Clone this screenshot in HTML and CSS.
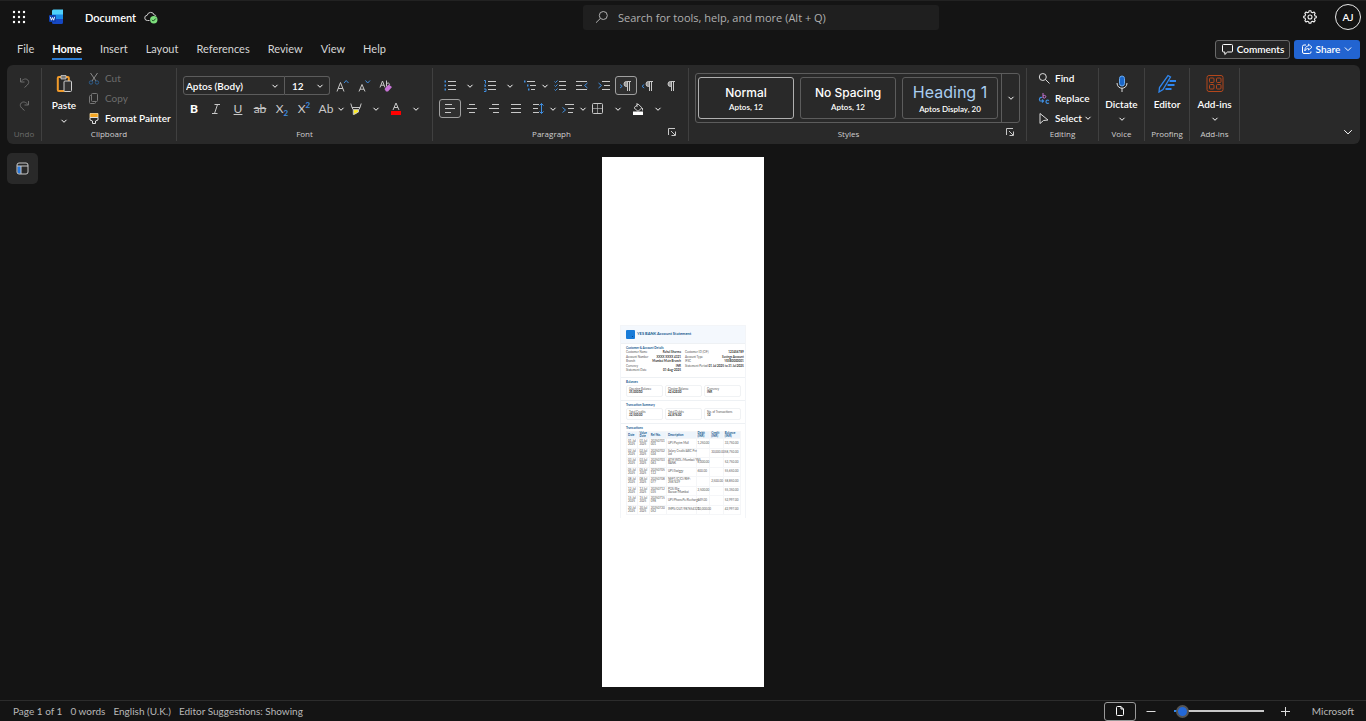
FILE: index.html
```html
<!doctype html>
<html lang="en">

<head>
    <meta charset="utf-8">
    <meta name="viewport" content="width=device-width, initial-scale=1">
    <title>Document</title>
    <link rel="stylesheet" href="styles.css">
</head>

<body>
    <!-- shared icons -->
    <svg class="sprite" aria-hidden="true">
        <symbol id="chevron" viewBox="0 0 8 8"><path d="M1.500 2.800 4 5.300 6.500 2.800" fill="none" stroke="currentColor" vector-effect="non-scaling-stroke" /></symbol>
        <symbol id="search" viewBox="0 0 14 14"><circle cx="8.300" cy="5.500" r="4" fill="none" stroke="currentColor" /><path d="M5.300 8.500 1 12.700" stroke="currentColor" /></symbol>
        <symbol id="launcher" viewBox="0 0 10 10"><path d="M1.500 8V1.500H8M4 4l4 4M8.500 4.500v4h-4" fill="none" stroke="currentColor" /></symbol>
        <symbol id="pilcrow" viewBox="0 0 14 14"><path d="M12 2.500H7.500a2.500 2.500 0 0 0 0 5h1M8.500 2.500V12M10.500 2.500V12" fill="none" stroke="currentColor" /><path d="M8.500 2.500h-1a2.500 2.500 0 0 0 0 5h1z" fill="currentColor" opacity=".7" /></symbol>
    </svg>

    <!-- title bar -->
    <header class="titlebar">
        <div class="title-left">
            <button class="plain" aria-label="App launcher">
                <svg width="14" height="14" viewBox="0 0 14 14" fill="#fff">
                    <circle cx="2" cy="2" r="1.200" /><circle cx="7" cy="2" r="1.200" /><circle cx="12" cy="2" r="1.200" />
                    <circle cx="2" cy="7" r="1.200" /><circle cx="7" cy="7" r="1.200" /><circle cx="12" cy="7" r="1.200" />
                    <circle cx="2" cy="12" r="1.200" /><circle cx="7" cy="12" r="1.200" /><circle cx="12" cy="12" r="1.200" />
                </svg>
            </button>
            <svg class="word-logo" width="15" height="16" viewBox="0 0 15 16">
                <path d="M3 2a1.500 1.500 0 0 1 1.500-1.500H14V6H3z" fill="#4fd0fb" />
                <path d="M3 5.500h11v5H3z" fill="#1b8ae8" />
                <path d="M3 10h11v3.500a1.500 1.500 0 0 1-1.500 1.500H4.500A1.500 1.500 0 0 1 3 13.500z" fill="#1648c4" />
                <rect x="0" y="6" width="7" height="7" rx="1" fill="#0f3fae" />
                <path d="M1.300 7.800 2.400 11.200 3.500 8.500 4.600 11.200 5.700 7.800" fill="none" stroke="#fff" stroke-width=".9" />
            </svg>
            <span class="doc-name">Document</span>
            <svg width="14" height="14" viewBox="0 0 14 14">
                <path d="M5.500 10.500H3.500a2.600 2.600 0 0 1-.3-5.200 3.600 3.600 0 0 1 7-.3 2.600 2.600 0 0 1 2 1" fill="none" stroke="#d0d0d0" />
                <circle cx="9.800" cy="9.800" r="3.700" fill="#7de07d" />
                <path d="m8 9.800 1.300 1.300 2.500-2.600" fill="none" stroke="#17441b" />
            </svg>
        </div>
        <label class="search">
            <svg width="14" height="14"><use href="#search" /></svg>
            <input type="text" placeholder="Search for tools, help, and more (Alt + Q)" aria-label="Search">
        </label>
        <div class="title-right">
            <button class="plain" aria-label="Settings">
                <svg width="14" height="14" viewBox="0 0 14 14" fill="none" stroke="#f0f0f0" stroke-width="1.100">
                    <path d="M5.700 2.300 6 .8h2l.3 1.500 1.300.5 1.300-.8 1.300 1.300-.8 1.300.5 1.300 1.400.3v1.600l-1.400.3-.5 1.300.8 1.300-1.300 1.300-1.300-.8-1.300.5-.3 1.400H6l-.3-1.400-1.300-.5-1.300.8-1.300-1.300.8-1.300-.5-1.300L.7 7.800V6.200l1.400-.3.5-1.300-.8-1.300L3.100 2l1.300.8z" stroke-linejoin="round" />
                    <circle cx="7" cy="7" r="2" />
                </svg>
            </button>
            <button class="avatar">AJ</button>
        </div>
    </header>

    <!-- tabs -->
    <nav class="tabs">
        <a href="#">File</a>
        <a href="#" class="active">Home</a>
        <a href="#">Insert</a>
        <a href="#">Layout</a>
        <a href="#">References</a>
        <a href="#">Review</a>
        <a href="#">View</a>
        <a href="#">Help</a>
        <div class="tab-actions">
            <button class="comments">
                <svg width="13" height="13" viewBox="0 0 13 13"><path d="M2.500 1.500h8a1 1 0 0 1 1 1V8a1 1 0 0 1-1 1H6.500L3.800 11.500V9H2.500a1 1 0 0 1-1-1V2.500a1 1 0 0 1 1-1z" fill="none" stroke="#fff" /></svg>
                Comments
            </button>
            <button class="share">
                <svg width="12" height="12" viewBox="0 0 12 12" fill="none" stroke="#fff"><path d="M5 2H3a1.500 1.500 0 0 0-1.500 1.500V9A1.500 1.500 0 0 0 3 10.500h5.500A1.500 1.500 0 0 0 10 9V8.500" /><path d="M7.500 1.200 11 4.200 7.500 7V5.500C5.500 5.500 4.500 6.500 3.800 8c0-3 1.200-5 3.700-5.200z" stroke-linejoin="round" stroke-width=".9" /></svg>
                Share
                <svg width="10" height="10"><use href="#chevron" /></svg>
            </button>
        </div>
    </nav>

    <!-- ribbon -->
    <section class="ribbon">
        <div class="group undo">
            <div class="stack">
                <button class="tool" disabled aria-label="Undo"><svg width="13" height="13" viewBox="0 0 13 13"><path d="M2.500 2v4h4M2.800 5.800C5 2.800 8 2.200 9.800 4c1.500 1.700 1 3.500-.5 5L6.500 11.500" /></svg></button>
                <button class="tool" disabled aria-label="Redo"><svg width="13" height="13" viewBox="0 0 13 13"><path d="M10.500 2v4h-4M10.200 5.800C8 2.800 5 2.200 3.200 4c-1.500 1.700-1 3.500.5 5l2.800 2.500" /></svg></button>
            </div>
            <span class="caption dim">Undo</span>
        </div>

        <div class="group clipboard">
            <div class="group-body">
                <button class="big">
                    <svg width="17" height="19" viewBox="0 0 17 19">
                        <rect x="1.800" y="3" width="11" height="14" rx="1" fill="#292929" stroke="#f09a2a" stroke-width="2" />
                        <path d="M5 1.500h5V5H5z" fill="#777" stroke="#ddd" stroke-width=".7" />
                        <rect x="8" y="7" width="7.500" height="10.500" rx="1" fill="#333" stroke="#cfcfcf" />
                    </svg>
                    Paste
                    <svg width="8" height="8"><use href="#chevron" /></svg>
                </button>
                <div class="list">
                    <button class="line" disabled>
                        <svg width="12" height="13" viewBox="0 0 12 13" fill="none"><path d="M2.500 1 8 9M9.500 1 4 9" stroke="#8a8a8a" /><circle cx="3" cy="10.500" r="1.700" stroke="#2d5d8c" /><circle cx="9" cy="10.500" r="1.700" stroke="#2d5d8c" /></svg>
                        Cut
                    </button>
                    <button class="line" disabled>
                        <svg width="12" height="13" viewBox="0 0 12 13" fill="none" stroke="#777"><rect x="3.500" y="1.500" width="6" height="8" rx="1" /><path d="M3.500 3.500h-1a1 1 0 0 0-1 1v6a1 1 0 0 0 1 1h4a1 1 0 0 0 1-1v-1" /></svg>
                        Copy
                    </button>
                    <button class="line">
                        <svg width="12" height="13" viewBox="0 0 12 13"><path d="M2 1.500h8v4H2z" fill="#f5a623" stroke="#ffe0a0" stroke-width=".8" /><path d="M2 5.500h8V8L7.500 9v2.500h-3V9L2 8z" fill="#292929" stroke="#e0e0e0" /></svg>
                        Format Painter
                    </button>
                </div>
            </div>
            <span class="caption">Clipboard</span>
        </div>

        <div class="group font">
            <div class="row">
                <label class="combo name"><select aria-label="Font name"><option>Aptos (Body)</option></select><svg width="8" height="8"><use href="#chevron" /></svg></label>
                <label class="combo size"><select aria-label="Font size"><option>12</option></select><svg width="8" height="8"><use href="#chevron" /></svg></label>
                <button class="tool after-combo" aria-label="Increase font size"><svg width="14" height="14" viewBox="0 0 14 14"><path d="M2 12.500 5.500 3.500 9 12.500M3.200 9.500h4.600" /><path class="blue" d="m9 4 2.200-2.500L13.500 4" /></svg></button>
                <button class="tool" aria-label="Decrease font size"><svg width="14" height="14" viewBox="0 0 14 14"><path d="M2 12.500 5 5.500 8 12.500M3 10.200h4" /><path class="blue" d="m8.500 1.500 2.200 2.500L13 1.500" /></svg></button>
                <button class="tool" aria-label="Clear formatting"><svg width="14" height="14" viewBox="0 0 14 14"><path d="M1 8.500 3.500 2 6 8.500M2 6.200h3M7.500 1.500v6M7.500 5c1.500-2 3.500-.5 3 1" /><path d="m5.500 10 4-4.500L13 8l-4 4.500H7z" fill="#c774d6" stroke="none" /></svg></button>
            </div>
            <div class="row">
                <button class="tool letter"><b>B</b></button>
                <button class="tool" aria-label="Italic"><svg width="14" height="14" viewBox="0 0 14 14"><path d="M5.500 2.500H11M3 11.500h5.500M8.500 2.500l-3 9" /></svg></button>
                <button class="tool letter"><u>U</u></button>
                <button class="tool letter"><s>ab</s></button>
                <button class="tool letter"><span>X<sub>2</sub></span></button>
                <button class="tool letter"><span>X<sup>2</sup></span></button>
                <button class="tool letter">Ab</button>
                <button class="drop" aria-label="Change case"><svg width="8" height="8"><use href="#chevron" /></svg></button>
                <button class="tool" aria-label="Highlight"><svg width="14" height="14" viewBox="0 0 14 14"><path d="M4.500 7.500h5V10L6 12.500H4.500z" fill="#ffee22" stroke="none" /><path d="M1.800 1.500 3 5.500h8l1.200-4M3 5.500l1.200 2.200h5.600L11 5.500M4.300 7.700v4.800L9.500 10V7.700" /></svg></button>
                <button class="drop wide" aria-label="Highlight colour"><svg width="8" height="8"><use href="#chevron" /></svg></button>
                <button class="tool" aria-label="Font colour"><svg width="14" height="14" viewBox="0 0 14 14"><path d="m4 8 3-7 3 7M5 5.500h4" /><path d="M2 9h10v4H2z" fill="#f00" stroke="none" /></svg></button>
                <button class="drop wide" aria-label="Font colours"><svg width="8" height="8"><use href="#chevron" /></svg></button>
            </div>
            <span class="caption">Font</span>
        </div>

        <div class="group paragraph">
            <div class="row">
                <button class="tool" aria-label="Bullets"><svg width="14" height="14" viewBox="0 0 14 14"><path d="M5 2.500h8M5 6.500h8M5 10.500h8" /><path class="blue" d="M1.500 2.500H3M1.500 6.500H3M1.500 10.500H3" stroke-width="2" /></svg></button>
                <button class="drop wide" aria-label="Bullet library"><svg width="8" height="8"><use href="#chevron" /></svg></button>
                <button class="tool" aria-label="Numbering"><svg width="14" height="14" viewBox="0 0 14 14"><path d="M5 2.500h8M5 6.500h8M5 10.500h8" /><path class="blue" d="M1 1.500h1.500v3M1 6h1.500v1.500H1.500M1 10h2v2.500H1" /></svg></button>
                <button class="drop wide" aria-label="Numbering library"><svg width="8" height="8"><use href="#chevron" /></svg></button>
                <button class="tool" aria-label="Multilevel list"><svg width="14" height="14" viewBox="0 0 14 14"><path d="M4 2.500h8M7 6.500h6M8 10.500h4" /><path class="blue" d="M1 2.500h1.500M4 6.500h1.500M5 10.500h1.500" stroke-width="2" /></svg></button>
                <button class="drop" aria-label="List levels"><svg width="8" height="8"><use href="#chevron" /></svg></button>
                <button class="tool" aria-label="Checklist"><svg width="14" height="14" viewBox="0 0 14 14"><path d="M6 2.500h7M6 6.500h7M6 10.500h7" /><path class="blue" d="m1.500 2.500 1 1 2-2M1.500 6.500l1 1 2-2M1.500 10.500l1 1 2-2" /></svg></button>
                <button class="tool" aria-label="Decrease indent"><svg width="14" height="14" viewBox="0 0 14 14"><path d="M1 2.500h11M1 6.500h6M1 10.500h11" /><path class="blue" d="M12.500 4 9.500 6.500l3 2.500" /></svg></button>
                <button class="tool" aria-label="Increase indent"><svg width="14" height="14" viewBox="0 0 14 14"><path d="M5 2.500h8M7 6.500h6M5 10.500h8" /><path class="blue" d="m1.500 4 3 2.500-3 2.500" /></svg></button>
                <button class="tool on" aria-label="Left to right"><svg width="14" height="14" viewBox="0 0 14 14"><use href="#pilcrow" /><path class="blue" d="m1 5.500 2.200 1.800L1 9" /></svg></button>
                <button class="tool" aria-label="Right to left"><svg width="14" height="14" viewBox="0 0 14 14"><use href="#pilcrow" /><path class="blue" d="M3.200 5.500 1 7.300 3.200 9" /></svg></button>
                <button class="tool" aria-label="Show marks"><svg width="14" height="14"><use href="#pilcrow" /></svg></button>
            </div>
            <div class="row">
                <button class="tool on" aria-label="Align left"><svg width="14" height="14" viewBox="0 0 14 14"><path d="M2 2.500h7M2 6.500h10M2 10.500h6" /></svg></button>
                <button class="tool" aria-label="Centre"><svg width="14" height="14" viewBox="0 0 14 14"><path d="M4 2.500h6M2 6.500h10M4 10.500h6" /></svg></button>
                <button class="tool" aria-label="Align right"><svg width="14" height="14" viewBox="0 0 14 14"><path d="M5 2.500h7M2 6.500h10M6 10.500h6" /></svg></button>
                <button class="tool" aria-label="Justify"><svg width="14" height="14" viewBox="0 0 14 14"><path d="M2 2.500h10M2 6.500h10M2 10.500h10" /></svg></button>
                <button class="tool" aria-label="Line spacing"><svg width="14" height="14" viewBox="0 0 14 14"><path d="M2 2.500h6M2 6.500h5M2 10.500h6" /><path class="blue" d="M10.500 1.500v10M8.500 3.500l2-2 2 2M8.500 9.500l2 2 2-2" /></svg></button>
                <button class="drop" aria-label="Line spacing options"><svg width="8" height="8"><use href="#chevron" /></svg></button>
                <button class="tool" aria-label="Special indent"><svg width="14" height="14" viewBox="0 0 14 14"><path d="M4 2.500h9M7 6.500h6M7 10.500h5" /><path class="blue" d="m1.500 5.500 3 2.500-3 2.500" /></svg></button>
                <button class="drop" aria-label="Indent options"><svg width="8" height="8"><use href="#chevron" /></svg></button>
                <button class="tool" aria-label="Borders"><svg width="14" height="14" viewBox="0 0 14 14"><rect x="1.500" y="1.500" width="10" height="10" rx="1" /><path d="M6.500 1.500v10M1.500 6.500h10" opacity=".6" /></svg></button>
                <button class="drop wide" aria-label="Border options"><svg width="8" height="8"><use href="#chevron" /></svg></button>
                <button class="tool" aria-label="Shading"><svg width="14" height="14" viewBox="0 0 14 14"><path d="M6 1v4M3 5.800 7 2l4 3.800L7 9.300zM11.500 6v2.500" /><path d="M2 9.500h10V13H2z" fill="#fff" stroke="none" /></svg></button>
                <button class="drop wide" aria-label="Shading colours"><svg width="8" height="8"><use href="#chevron" /></svg></button>
            </div>
            <span class="caption">Paragraph</span>
            <button class="launch" aria-label="Paragraph settings"><svg width="10" height="10"><use href="#launcher" /></svg></button>
        </div>

        <div class="group styles">
            <div class="gallery">
                <button class="style-card selected"><span class="sample">Normal</span>Aptos, 12</button>
                <button class="style-card"><span class="sample">No Spacing</span>Aptos, 12</button>
                <button class="style-card"><span class="sample heading">Heading 1</span>Aptos Display, 20</button>
                <button class="gallery-more" aria-label="More styles"><svg width="8" height="8"><use href="#chevron" /></svg></button>
            </div>
            <span class="caption">Styles</span>
            <button class="launch" aria-label="Styles settings"><svg width="10" height="10"><use href="#launcher" /></svg></button>
        </div>

        <div class="group editing">
            <div class="list">
                <button class="line"><svg width="12" height="13" viewBox="0 0 12 13" fill="none" stroke="#ddd"><circle cx="4.800" cy="5" r="3.500" /><path d="m7.500 7.500 4 4" /></svg>Find</button>
                <button class="line"><svg width="12" height="13" viewBox="0 0 12 13" fill="none"><path d="M5 1v5M5 4c2-1.500 3.500 0 2.500 1.500C7 6.300 6 6.300 5 5.500" stroke="#c774d6" /><path d="M4 5.500C1.500 5 .8 7.500 2 9h3M4 7.500 5.500 9 4 10.500M11 8.500c-2-1-3 0-3 1.300s1.300 2 3 1.200" stroke="#3f8ee0" stroke-width="1.200" /></svg>Replace</button>
                <button class="line"><svg width="12" height="13" viewBox="0 0 12 13" fill="none" stroke="#ddd"><path d="M2 1.500 10 8l-4.500.5L2 11.500z" stroke-linejoin="round" /></svg>Select<svg class="tail" width="8" height="8"><use href="#chevron" /></svg></button>
            </div>
            <span class="caption">Editing</span>
        </div>

        <div class="group voice">
            <button class="big">
                <svg width="18" height="19" viewBox="0 0 18 19"><rect x="6.500" y="2" width="5" height="10" rx="2.500" fill="#1b67c9" stroke="#68a8ef" /><path d="M4 9c0 7 10 7 10 0M9 14v4" fill="none" stroke="#ddd" /></svg>
                Dictate
                <svg width="8" height="8"><use href="#chevron" /></svg>
            </button>
            <span class="caption">Voice</span>
        </div>

        <div class="group proofing">
            <button class="big">
                <svg width="20" height="19" viewBox="0 0 20 19" fill="none" stroke="#2f86ee"><path d="M11 1.500 13.500 3 6 15.500l-4 2.500.5-4.500z" stroke-width="1.300" /><path d="M12.500 7H19M10.500 11h7M8.500 15h6" stroke-width="2.200" /></svg>
                Editor
            </button>
            <span class="caption">Proofing</span>
        </div>

        <div class="group addins">
            <button class="big">
                <svg width="18" height="19" viewBox="0 0 18 19" fill="none" stroke="#b4471c"><rect x="1" y="1.500" width="16" height="16" rx="2" /><rect x="3.500" y="4" width="4.500" height="4.500" rx="1" /><rect x="10.500" y="4" width="4.500" height="4.500" rx="1" /><rect x="3.500" y="10.500" width="4.500" height="4.500" rx="1" /><rect x="10.500" y="10.500" width="4.500" height="4.500" rx="1" /></svg>
                Add-ins
                <svg width="8" height="8"><use href="#chevron" /></svg>
            </button>
            <span class="caption">Add-ins</span>
        </div>

        <button class="collapse" aria-label="Collapse ribbon"><svg width="12" height="12"><use href="#chevron" /></svg></button>
    </section>

    <!-- document area -->
    <main class="workspace">
        <button class="nav-toggle" aria-label="Navigation">
            <svg width="13" height="13" viewBox="0 0 13 13"><path d="M1.500 4H5v7.500H1.500z" fill="#2878dd" /><rect x="1" y="1" width="11" height="11" rx="2" fill="none" stroke="#c8c8c8" /><path d="M1 4h11M5 4v8" stroke="#c8c8c8" /></svg>
        </button>

        <article class="paper">
            <div class="statement">
                <header class="bank">
                    <svg width="9" height="9" viewBox="0 0 9 9"><rect width="9" height="9" rx="1" fill="#187bd8" /><circle cx="6.500" cy="6.500" r=".6" fill="#0b3c8a" /></svg>
                    <h1>YES BANK Account Statement</h1>
                </header>
                <section>
                    <h2>Customer &amp; Account Details</h2>
                    <div class="details">
                        <dl>
                            <dt>Customer Name</dt><dd>Rahul Sharma</dd>
                            <dt>Account Number</dt><dd>XXXX XXXX 4321</dd>
                            <dt>Branch</dt><dd>Mumbai Main Branch</dd>
                            <dt>Currency</dt><dd>INR</dd>
                            <dt>Statement Date</dt><dd>01-Aug-2025</dd>
                        </dl>
                        <dl>
                            <dt>Customer ID (CIF)</dt><dd>123456789</dd>
                            <dt>Account Type</dt><dd>Savings Account</dd>
                            <dt>IFSC</dt><dd>YESB0000001</dd>
                            <dt>Statement Period</dt><dd>01 Jul 2025 to 31 Jul 2025</dd>
                        </dl>
                    </div>
                </section>
                <section>
                    <h2>Balances</h2>
                    <div class="boxes">
                        <p>Opening Balance<b>35,000.00</b></p>
                        <p>Closing Balance<b>42,624.00</b></p>
                        <p>Currency<b>INR</b></p>
                    </div>
                </section>
                <section>
                    <h2>Transaction Summary</h2>
                    <div class="boxes">
                        <p>Total Credits<b>32,500.00</b></p>
                        <p>Total Debits<b>24,876.00</b></p>
                        <p>No. of Transactions<b>10</b></p>
                    </div>
                </section>
                <section>
                    <h2>Transactions</h2>
                    <table>
                        <colgroup><col class="c-date"><col class="c-date"><col class="c-ref"><col class="c-desc"><col class="c-sum"><col class="c-sum"><col class="c-bal"></colgroup>
                        <thead>
                            <tr><th>Date</th><th>Value<br>Date</th><th>Ref No.</th><th>Description</th><th>Debit<br>(INR)</th><th>Credit<br>(INR)</th><th>Balance<br>(INR)</th></tr>
                        </thead>
                        <tbody>
                            <tr><td>01 Jul<br>2025</td><td>01 Jul<br>2025</td><td>20250701<br>001</td><td>UPI/Paytm Mall</td><td>1,250.00</td><td></td><td>33,750.00</td></tr>
                            <tr><td>02 Jul<br>2025</td><td>02 Jul<br>2025</td><td>20250702<br>024</td><td>Salary Credit/ABC Pvt<br>Ltd</td><td></td><td>30,000.00</td><td>58,750.00</td></tr>
                            <tr><td>03 Jul<br>2025</td><td>03 Jul<br>2025</td><td>20250703<br>063</td><td>ATM WDL/Mumbai/YES<br>BANK</td><td>6,000.00</td><td></td><td>52,750.00</td></tr>
                            <tr><td>05 Jul<br>2025</td><td>05 Jul<br>2025</td><td>20250705<br>112</td><td>UPI/Swiggy</td><td>600.00</td><td></td><td>55,650.00</td></tr>
                            <tr><td>08 Jul<br>2025</td><td>08 Jul<br>2025</td><td>20250708<br>077</td><td>NEFT/ICICI/REF:<br>2587429</td><td></td><td>2,500.00</td><td>58,850.00</td></tr>
                            <tr><td>12 Jul<br>2025</td><td>12 Jul<br>2025</td><td>20250712<br>035</td><td>POS/Big<br>Bazaar/Mumbai</td><td>2,500.00</td><td></td><td>55,350.00</td></tr>
                            <tr><td>15 Jul<br>2025</td><td>15 Jul<br>2025</td><td>20250715<br>098</td><td>UPI/PhonePe/Recharge</td><td>349.00</td><td></td><td>52,997.00</td></tr>
                            <tr><td>20 Jul<br>2025</td><td>20 Jul<br>2025</td><td>20250720<br>052</td><td>IMPS/OUT/987654321</td><td>10,000.00</td><td></td><td>42,997.00</td></tr>
                        </tbody>
                    </table>
                </section>
            </div>
        </article>
    </main>

    <!-- status bar -->
    <footer class="statusbar">
        <span>Page 1 of 1</span>
        <span>0 words</span>
        <span>English (U.K.)</span>
        <span>Editor Suggestions: Showing</span>
        <div class="zoom">
            <button class="view" aria-label="Page view"><svg width="10" height="12" viewBox="0 0 10 12"><path d="M2.500 1.500H6L8.500 4v5.500a1 1 0 0 1-1 1h-5a1 1 0 0 1-1-1v-7a1 1 0 0 1 1-1zM6 1.500V4h2.500" fill="none" stroke="#fff" /></svg></button>
            <button class="plain" aria-label="Zoom out"><svg width="10" height="10" viewBox="0 0 10 10"><path d="M.5 5.500h9" stroke="#ddd" /></svg></button>
            <input type="range" min="0" max="100" value="3" aria-label="Zoom">
            <button class="plain" aria-label="Zoom in"><svg width="10" height="10" viewBox="0 0 10 10"><path d="M1 5.500h9M5.500 1v9" stroke="#ddd" /></svg></button>
            <span class="brand">Microsoft</span>
        </div>
    </footer>
</body>

</html>
```
FILE: styles.css
```css
* {
    box-sizing: border-box;
}

body {
    margin: 0;
    min-height: 100vh;
    display: flex;
    flex-direction: column;
    background: #141414;
    color: #fff;
    font-family: Lato, "Open Sans", sans-serif;
    font-size: 10px;
    border-top: 1px solid #222;
}

button,
input,
select {
    font: inherit;
    color: inherit;
}

button {
    padding: 0;
    border: 0;
    background: none;
    display: flex;
    align-items: center;
    justify-content: center;
}

svg {
    flex: none;
    display: block;
}

.sprite {
    position: absolute;
    width: 0;
    height: 0;
}

/* Title bar */

.titlebar {
    height: 32px;
    display: grid;
    grid-template-columns: 1fr 356px 427px;
    align-items: center;
}

.title-left {
    display: flex;
    align-items: center;
    padding-left: 12px;
}

.word-logo {
    margin-left: 23px;
}

.doc-name {
    margin: 0 8px 0 21px;
    font-size: 11px;
    font-weight: 600;
}

.search {
    height: 25px;
    padding: 0 12px;
    display: flex;
    align-items: center;
    gap: 9px;
    background: #1f1f1f;
    border-radius: 3px;
    color: #b0b0b0;
    font-family: "Open Sans", "Noto Sans", sans-serif;
    font-size: 11px;
}

.search input {
    flex: 1;
    padding: 0;
    border: 0;
    outline: 0;
    background: none;
}

.search input::placeholder {
    color: #b0b0b0;
    opacity: 1;
}

.title-right {
    display: flex;
    align-items: center;
    justify-content: flex-end;
    gap: 18px;
    padding-right: 5px;
}

.avatar {
    width: 26px;
    height: 26px;
    border: 1px solid #e8e8e8;
    border-radius: 50%;
    font-weight: 600;
}

/* Tabs */

.tabs {
    height: 32px;
    padding: 0 6px 0 17px;
    display: flex;
    align-items: center;
    gap: 18px;
    font-size: 11px;
}

.tabs a {
    height: 22px;
    line-height: 22px;
    color: #d6d6d6;
    text-decoration: none;
}

.tabs .active {
    color: #fff;
    font-weight: 700;
    border-bottom: 2px solid #2b7cd3;
}

.tab-actions {
    margin-left: auto;
    display: flex;
    gap: 4px;
    font-size: 10px;
    font-weight: 600;
}

.comments,
.share {
    height: 19px;
    gap: 3px;
    border-radius: 3px;
}

.comments {
    width: 75px;
    border: 1px solid #6a6a6a;
    background: #242424;
}

.share {
    width: 66px;
    background: #2264d1;
}

/* Ribbon */

.ribbon {
    height: 79px;
    margin: 0 6px 0 7px;
    padding: 3px 0;
    display: flex;
    background: #292929;
    border-radius: 6px;
}

.group {
    position: relative;
    flex: none;
    display: flex;
    flex-direction: column;
    padding: 0 6px;
    border-right: 1px solid #404040;
}

.caption {
    margin-top: auto;
    height: 13px;
    line-height: 11px;
    font-family: "Open Sans", "Noto Sans", sans-serif;
    font-size: 8px;
    text-align: center;
    color: #d0d0d0;
}

.paragraph .caption,
.styles .caption {
    padding-right: 18px;
}

.undo {
    width: 35px;
}

.clipboard {
    width: 135px;
}

.font,
.paragraph {
    width: 256px;
}

.styles {
    width: 338px;
}

.editing {
    width: 72px;
}

.voice,
.proofing {
    width: 46px;
    padding: 0;
}

.proofing {
    width: 45px;
}

.addins {
    width: 50px;
    padding: 0;
}

.caption.dim {
    color: #6c6c6c;
}

.stack {
    padding-top: 5px;
    display: flex;
    flex-direction: column;
    gap: 4px;
}

.group-body {
    display: flex;
    gap: 8px;
}

.big {
    width: 100%;
    padding-top: 6px;
    flex: none;
    flex-direction: column;
    justify-content: flex-start;
    gap: 3px;
    font-weight: 600;
    line-height: 16px;
}

.clipboard .big {
    width: 32px;
    gap: 4px;
}

.list {
    height: 60px;
    display: flex;
    flex-direction: column;
}

.editing .list {
    padding-left: 5px;
}

.line {
    height: 20px;
    flex: none;
    gap: 5px;
    justify-content: flex-start;
    font-weight: 600;
    white-space: nowrap;
}

.line:disabled {
    color: #6c6c6c;
    font-weight: 400;
}

.tail {
    margin-left: -3px;
}

.row {
    height: 19px;
    margin-bottom: 4px;
    display: flex;
}

.group > .row:first-child {
    margin-top: 8px;
}

.tool {
    width: 22px;
    height: 19px;
    flex: none;
    border-radius: 3px;
}

.tool svg {
    fill: none;
    stroke: #c8c8c8;
    color: #c8c8c8;
}

.tool:disabled svg {
    stroke: #6c6c6c;
}

.tool .blue {
    stroke: #3f8ee0;
}

.tool use {
    stroke: none;
}

.tool.on {
    border: 1px solid #a0a0a0;
    background: #303030;
}

.letter {
    font-size: 12px;
    color: #c8c8c8;
}

.letter b {
    font-weight: 900;
    color: #fff;
}

.letter sub,
.letter sup {
    font-size: 8px;
    font-weight: 700;
    line-height: 0;
    color: #3f8ee0;
}

.drop {
    width: 8px;
    flex: none;
}

.drop.wide {
    width: 18px;
}

.combo {
    display: flex;
    align-items: center;
    padding: 0 5px 0 2px;
    border: 1px solid #5c5c5c;
}

.combo select {
    flex: 1;
    min-width: 0;
    padding: 0;
    appearance: none;
    border: 0;
    background: none;
    font-weight: 600;
}

.combo.name {
    width: 102px;
    border-radius: 3px 0 0 3px;
}

.combo.size {
    width: 45px;
    padding-left: 7px;
    border-left: 0;
    border-radius: 0 3px 3px 0;
}

.after-combo {
    margin-left: 1px;
}

.launch {
    position: absolute;
    right: 11px;
    bottom: 4px;
    color: #c8c8c8;
}

/* Styles gallery */

.gallery {
    height: 50px;
    margin-top: 5px;
    padding-left: 2px;
    display: flex;
    align-items: center;
    gap: 6px;
    border: 1px solid #5c5c5c;
    border-radius: 3px;
}

.style-card {
    width: 96px;
    height: 42px;
    flex-direction: column;
    border: 1px solid #5c5c5c;
    border-radius: 3px;
    font-size: 8px;
    font-weight: 600;
    line-height: 12px;
}

.style-card.selected {
    border-color: #b0b0b0;
}

.sample {
    font-family: Inter, "Open Sans", sans-serif;
    font-size: 12px;
    font-weight: 500;
    line-height: 17px;
}

.sample.heading {
    font-size: 16px;
    font-weight: 400;
    line-height: 21px;
    color: #a9cdf0;
}

.gallery-more {
    flex: 1;
    height: 48px;
    margin-left: -3px;
    border-left: 1px solid #5c5c5c;
}

.collapse {
    margin: auto 6px 3px auto;
}

/* Document area */

.workspace {
    flex: 1;
    padding: 9px 7px 13px;
    display: grid;
    grid-template-columns: 31px 1fr 31px;
    justify-items: center;
    align-items: start;
}

.nav-toggle {
    width: 31px;
    height: 31px;
    background: #292929;
    border-radius: 5px;
}

.paper {
    width: 162px;
    height: 530px;
    margin-top: 4px;
    padding: 168px 18px 0;
    background: #fff;
    color: #555;
    font-size: 3px;
    line-height: 3px;
}

.statement {
    border: 1px solid #f3f5f8;
    border-bottom: 0;
}

.statement h1,
.statement h2,
.statement p,
.statement dl,
.statement dd {
    margin: 0;
}

.bank {
    height: 17px;
    padding: 0 5px;
    display: flex;
    align-items: center;
    gap: 2px;
    background: #f4f8fd;
}

.statement h1 {
    padding-bottom: 2px;
    font-size: 4px;
    line-height: 5px;
    color: #17588f;
}

.statement h2 {
    margin-bottom: 1px;
    font-size: 3px;
    line-height: 4px;
    color: #17588f;
}

.statement section {
    padding: 2px 4px 3px 5px;
    border-top: 1px solid #eef1f4;
}

.details {
    display: grid;
    grid-template-columns: 55px minmax(0, 1fr);
    gap: 4px;
}

.details dl {
    height: 23px;
    display: grid;
    grid-template-columns: auto auto;
    grid-template-rows: repeat(5, 1fr);
    white-space: nowrap;
}

.details dd {
    text-align: right;
    font-weight: 700;
    color: #333;
}

.boxes {
    display: grid;
    grid-template-columns: 1fr 1fr 1fr;
    gap: 2px;
}

.boxes p {
    height: 12px;
    padding: 2px;
    border: 1px solid #f0f2f4;
    border-radius: 2px;
}

.boxes b {
    display: block;
    color: #333;
}

.statement table {
    width: 100%;
    height: 84px;
    table-layout: fixed;
    border-collapse: collapse;
    white-space: nowrap;
}

.c-date {
    width: 10%;
}

.c-ref {
    width: 15%;
}

.c-desc {
    width: 26%;
}

.c-sum {
    width: 12%;
}

.c-bal {
    width: 15%;
}

.statement th,
.statement td {
    padding: 0 1px;
    border: 1px solid #f5f6f8;
    text-align: left;
    vertical-align: middle;
}

.statement th {
    background: #edf4fb;
    color: #17588f;
}

/* Status bar */

.statusbar {
    height: 21px;
    padding: 0 12px 0 13px;
    display: flex;
    align-items: center;
    gap: 8px;
    border-top: 1px solid #2c2c2c;
    color: #b8b8b8;
}

.zoom {
    margin-left: auto;
    display: flex;
    align-items: center;
}

.view {
    width: 32px;
    height: 19px;
    margin-right: 10px;
    border: 1px solid #999;
    border-radius: 3px;
}

.zoom input {
    width: 90px;
    height: 14px;
    margin: 0 16px 0 18px;
    appearance: none;
    background: linear-gradient(90deg, #2f86ee 3px, #c8c8c8 3px) center / 100% 2px no-repeat;
}

.zoom input::-webkit-slider-thumb {
    appearance: none;
    width: 13px;
    height: 13px;
    border: 2px solid #555;
    border-radius: 50%;
    background: #2368d8;
}

.brand {
    margin-left: 22px;
}
```
